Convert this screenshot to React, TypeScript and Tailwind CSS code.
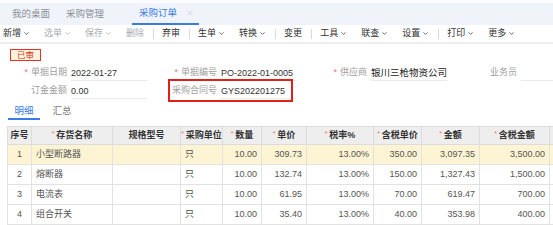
import { ChevronDown, X } from "lucide-react";

const tools = [
  { label: "新增", menu: true },
  { label: "选单", menu: true, off: true },
  { label: "保存", menu: true, off: true },
  { label: "删除", off: true },
  { sep: true },
  { label: "弃审" },
  { sep: true },
  { label: "生单", menu: true },
  { label: "转换", menu: true },
  { sep: true },
  { label: "变更" },
  { sep: true },
  { label: "工具", menu: true },
  { label: "联查", menu: true },
  { label: "设置", menu: true },
  { sep: true },
  { label: "打印", menu: true },
  { label: "更多", menu: true },
];

const cols = [
  { label: "序号", w: "w-[24px]" },
  { label: "存货名称", w: "w-[81px]", req: true },
  { label: "规格型号", w: "w-[68px]" },
  { label: "采购单位", w: "w-[42px]", req: true },
  { label: "数量", w: "w-[39px]", req: true },
  { label: "单价", w: "w-[45px]", req: true },
  { label: "税率%", w: "w-[67px]", req: true },
  { label: "含税单价", w: "w-[48px]", req: true },
  { label: "金额", w: "w-[58px]", req: true },
  { label: "含税金额", w: "w-[70px]", req: true },
  { label: "", w: "w-[40px]" },
];

const rows = [
  ["1", "小型断路器", "", "只", "10.00", "309.73", "13.00%", "350.00", "3,097.35", "3,500.00"],
  ["2", "熔断器", "", "只", "10.00", "132.74", "13.00%", "150.00", "1,327.43", "1,500.00"],
  ["3", "电流表", "", "只", "10.00", "61.95", "13.00%", "70.00", "619.47", "700.00"],
  ["4", "组合开关", "", "只", "10.00", "35.40", "13.00%", "40.00", "353.98", "400.00"],
];

function Field({
  label,
  value,
  req,
  boxed,
  bold,
}: {
  label: string;
  value: string;
  req?: boolean;
  boxed?: boolean;
  bold?: boolean;
}) {
  return (
    <div className="relative flex h-[18px] items-center">
      <div className="w-[70px] pr-[3px] text-right text-[#a0a0a0]">
        {req ? <span className="mr-[3px] text-[#f07070]">*</span> : null}
        {label}
      </div>
      <div
        className={`ml-[1px] h-[16px] w-[76px] border-b border-[#ececec] leading-[16px] ${
          bold ? "text-[9.5px] text-[#222]" : "text-[#333]"
        }`}
      >
        {value}
      </div>
      {/* 标注框 */}
      {boxed ? (
        <div className="pointer-events-none absolute -top-[3px] -bottom-[2px] left-[18px] right-[7px] border-2 border-[#e0201c]" />
      ) : null}
    </div>
  );
}

export default function App() {
  return (
    <div className="h-[225px] w-[553px] overflow-hidden bg-white font-['Liberation_Sans','Noto_Sans_CJK_SC',sans-serif] text-[9px] text-[#333]">
      {/* 页签栏 */}
      <div className="flex h-[25px] items-end border-t-[3px] border-[#fafbfd] bg-[#f0f4fa] text-[9.5px]">
        <div className="flex h-[22px] items-center px-[12px] text-[#8a8f99]">我的桌面</div>
        <div className="flex h-[22px] items-center px-[4px] text-[#8a8f99]">采购管理</div>
        <div className="ml-[24px] flex h-[22px] items-center gap-[9px] border-b-2 border-[#3b7be8] pl-[7px] pr-[5px] text-[#3b7be8]">
          采购订单
          <X size={8} className="text-[#b8bec8]" strokeWidth={1.5} />
        </div>
      </div>

      {/* 工具栏 */}
      <div className="flex h-[19px] items-center gap-[14px] border-b-2 border-[#eceef1] pl-[3px]">
        {tools.map((t, i) =>
          t.sep ? (
            <div key={i} className="-mx-[5.5px] h-[10px] w-px bg-[#d6d8dc]" />
          ) : (
            <div
              key={i}
              className={`flex items-center gap-[2px] ${t.off ? "text-[#a8abb0]" : "text-[#333]"}`}
            >
              {t.label}
              {t.menu ? <ChevronDown size={7} strokeWidth={2.5} /> : null}
            </div>
          )
        )}
      </div>

      {/* 表头 */}
      <div className="px-[10px] pt-[5px]">
        <div className="flex h-[12px] w-[31px] items-center justify-center border border-[#e0342c] bg-[#fdf3da] text-[8.5px] text-[#e0342c]">
          已审
        </div>
      </div>

      <div className="mt-[3px] grid grid-cols-[150px_150px_150px_150px]">
        <Field label="单据日期" value="2022-01-27" req />
        <Field label="单据编号" value="PO-2022-01-0005" req />
        <Field label="供应商" value="银川三枪物资公司" req bold />
        <Field label="业务员" value="" />
        <Field label="订金金额" value="0.00" />
        <Field label="采购合同号" value="GYS202201275" boxed />
      </div>

      {/* 明细 / 汇总 */}
      <div className="mt-[4px] flex h-[16px] items-start gap-[2px] pl-[8px]">
        <div className="h-[16px] w-[32px] border-b-2 border-[#3b7be8] text-center text-[9.5px] text-[#3b7be8]">
          明细
        </div>
        <div className="w-[40px] text-center text-[9.5px] text-[#777]">汇总</div>
      </div>

      <div className="mt-[6px] pl-[7px]">
        <table className="w-[582px] table-fixed border-collapse">
          <colgroup>
            {cols.map((c, i) => (
              <col key={i} className={c.w} />
            ))}
          </colgroup>
          <thead>
            <tr className="h-[18px] bg-[#eeeeee]">
              {cols.map((c, i) => (
                <th
                  key={i}
                  className="border border-[#dcdcdc] p-0 text-center text-[9px] font-semibold text-[#333]"
                >
                  {c.req ? <span className="mr-[2px] align-top text-[7px] font-normal text-[#f07070]">*</span> : null}
                  {c.label}
                </th>
              ))}
            </tr>
          </thead>
          <tbody>
            {rows.map((r, ri) => (
              <tr key={ri} className={`h-[20px] ${ri === 0 ? "bg-[#fdf4d3]" : "bg-white"}`}>
                {r.map((v, ci) => (
                  <td
                    key={ci}
                    className={`overflow-hidden whitespace-nowrap border border-[#e2e2e2] py-0 text-[#555] ${
                      ci === 0 ? "text-center" : ci <= 3 ? "px-[4px] text-left" : "px-[4px] text-right"
                    }`}
                  >
                    {v}
                  </td>
                ))}
                <td className="border border-[#e2e2e2]" />
              </tr>
            ))}
          </tbody>
        </table>
      </div>
    </div>
  );
}
